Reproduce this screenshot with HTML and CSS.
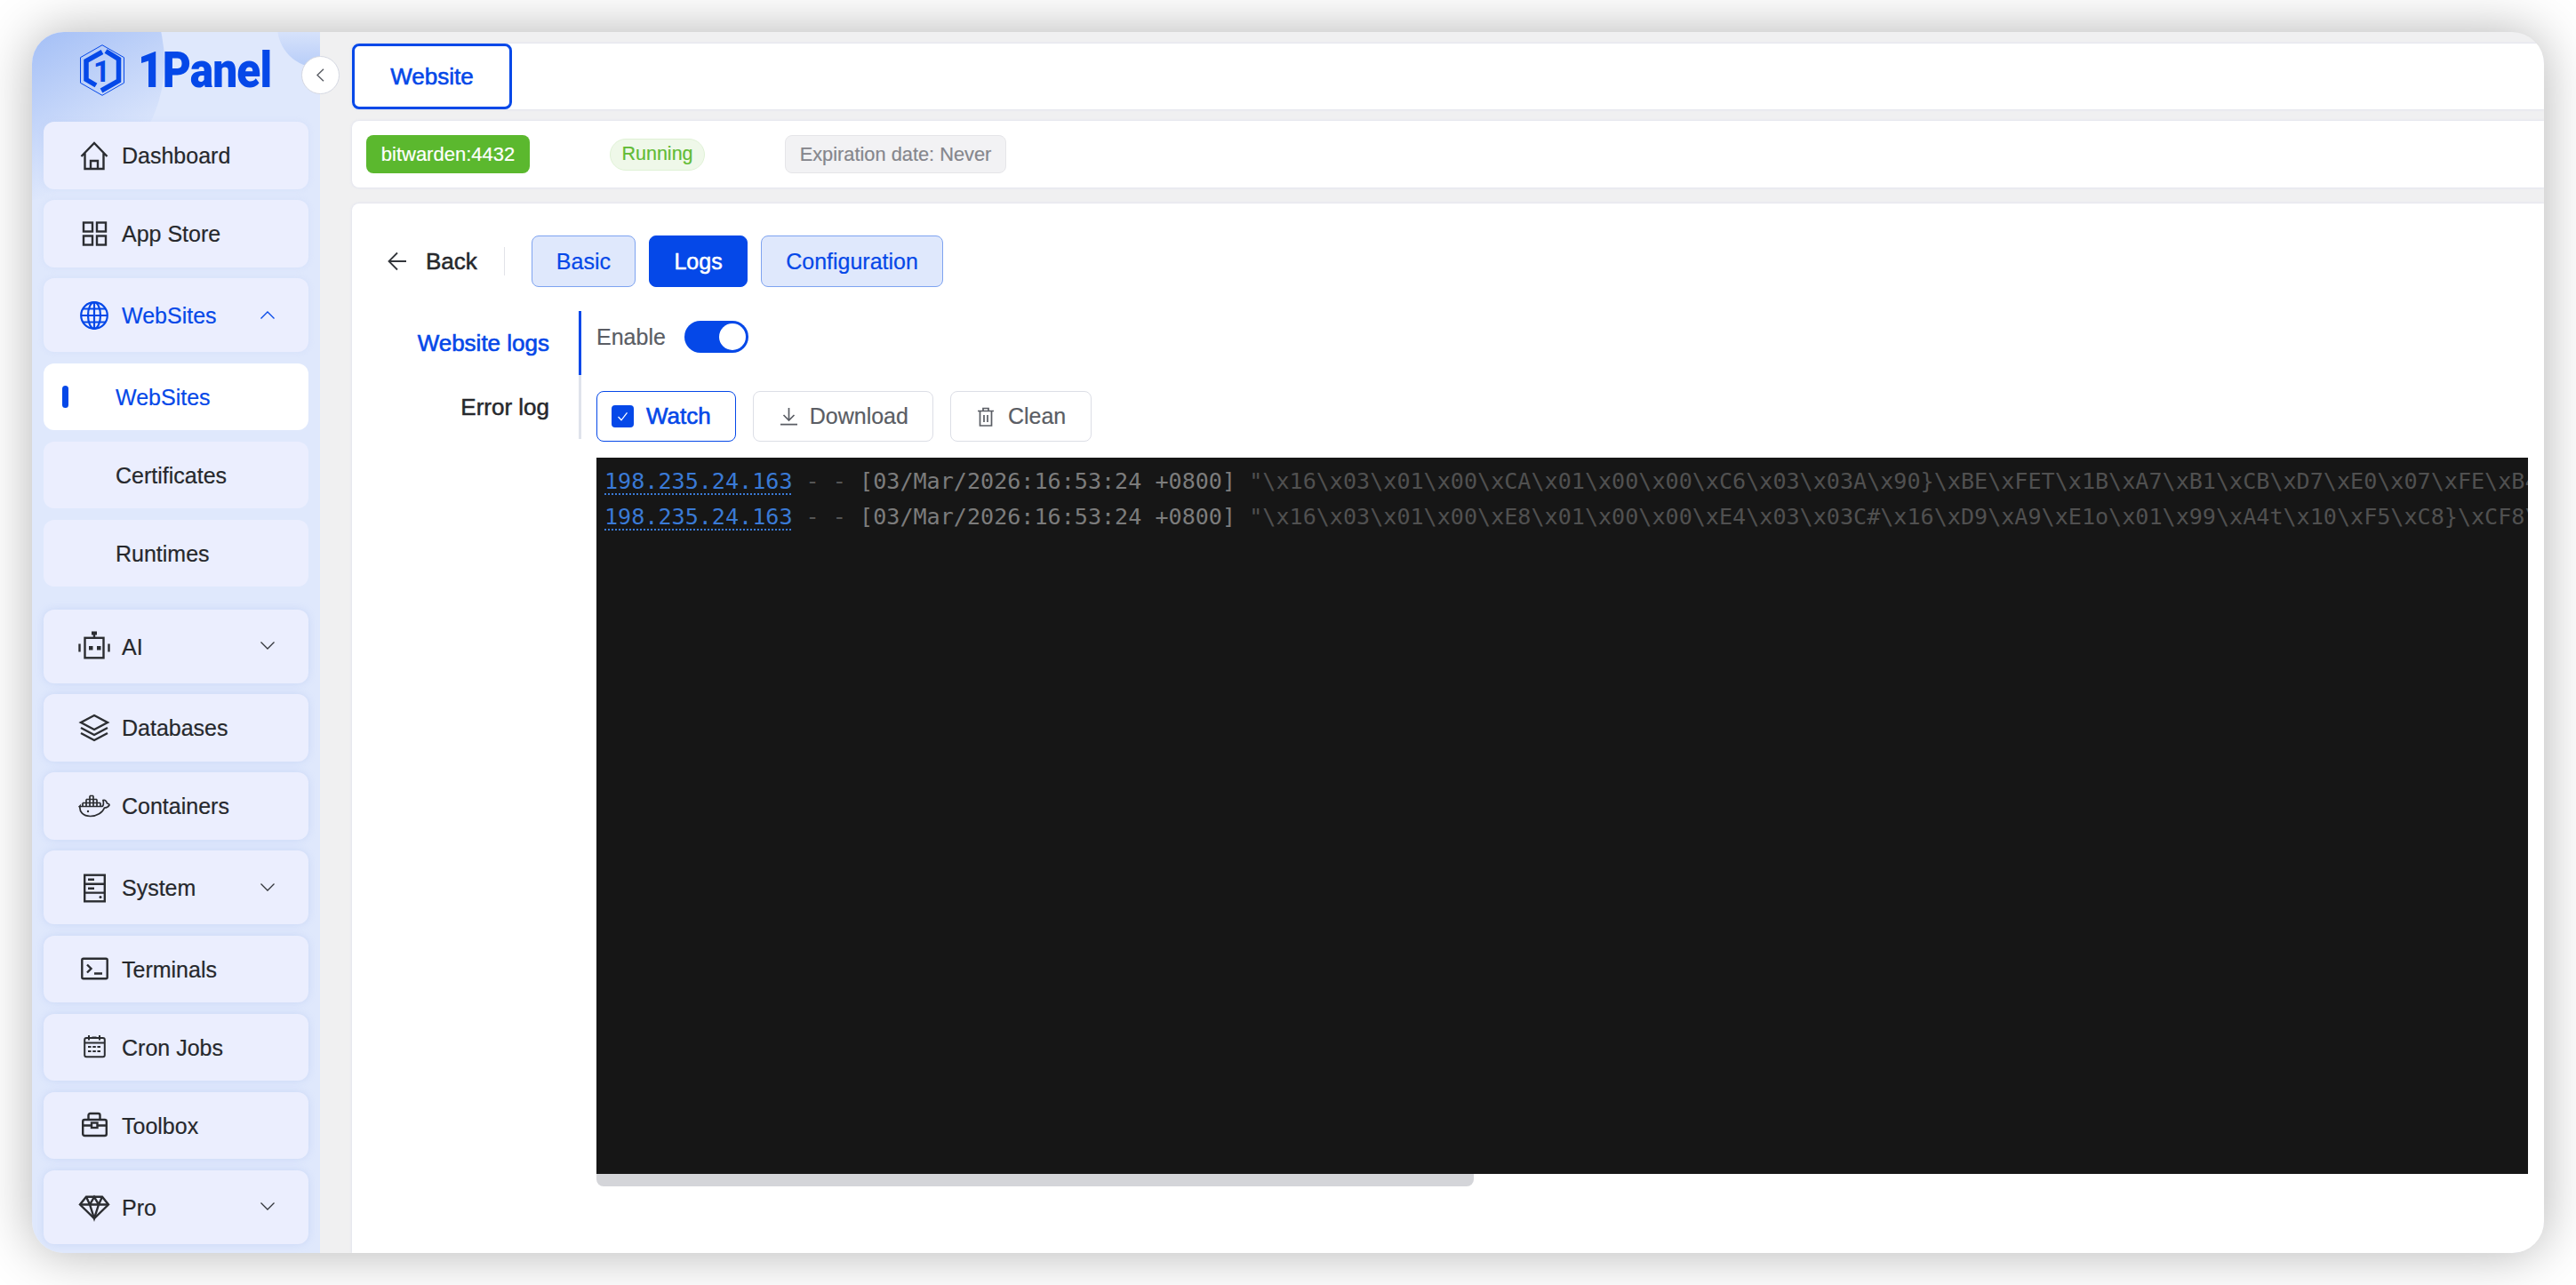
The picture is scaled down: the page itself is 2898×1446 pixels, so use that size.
FILE: index.html
```html
<!DOCTYPE html>
<html lang="en">
<head>
<meta charset="utf-8">
<title>1Panel</title>
<link rel="stylesheet" href="styles.css">
</head>
<body>
<div class="window">
  <aside class="sidebar">
    <div class="deco"><span class="blob-a"></span><span class="blob-b"></span></div>
    <div class="brand">
      <svg class="brand-mark" viewBox="0 0 50 58" width="50" height="58">
        <polygon points="25,.7 49.5,14.7 49.5,43.3 25,57.3 .5,43.3 .5,14.7" fill="none" stroke="#0548e8" stroke-width="1"/>
        <path d="M25 8.5 L7 18.5 V39.5 L18 46" fill="none" stroke="#0548e8" stroke-width="5.5"/>
        <path d="M29 7.5 L43.5 16.5 V41 L24 52" fill="none" stroke="#0548e8" stroke-width="5.5"/>
        <text x="24.5" y="42" class="brand-one">1</text>
      </svg>
      <span class="brand-name">1Panel</span>
    </div>
    <nav class="menu">
      <a class="item"><svg class="ico" viewBox="0 0 36 36"><path d="M3.5 19 18 4l14.5 15M7.5 15.5V33h21V15.500M14 33v-9h8v9"/></svg><span>Dashboard</span></a>
      <a class="item"><svg class="ico" viewBox="0 0 36 36"><rect x="6" y="5.500" width="10" height="10"/><rect x="21" y="5.500" width="10" height="10"/><rect x="6" y="20.500" width="10" height="10"/><rect x="21" y="20.500" width="10" height="10"/></svg><span>App Store</span></a>
      <a class="item tall active"><svg class="ico" viewBox="0 0 36 36"><circle cx="18" cy="18" r="14.800"/><ellipse cx="18" cy="18" rx="7" ry="14.800"/><path d="M3.200 18h29.600M5.500 10.500h25M5.500 25.500h25M18 3.200v29.600"/></svg><span>WebSites</span><svg class="chev" viewBox="0 0 16 9"><path d="M.5 8.500 8 1l7.500 7.500"/></svg></a>
      <a class="item sub current"><span>WebSites</span></a>
      <a class="item sub"><span>Certificates</span></a>
      <a class="item sub"><span>Runtimes</span></a>
      <a class="item tall lifted section-start"><svg class="ico" viewBox="0 0 36 36"><rect x="7.500" y="8.800" width="21" height="22.500"/><path d="M18 4v5"/><rect class="solid" x="15" y="1.500" width="6" height="4"/><rect class="solid" x=".3" y="15.500" width="2.400" height="9"/><rect class="solid" x="33.300" y="15.500" width="2.400" height="9"/><rect class="solid" x="12" y="18" width="4.500" height="4.500"/><rect class="solid" x="21" y="18" width="4.500" height="4.500"/></svg><span>AI</span><svg class="chev" viewBox="0 0 16 9"><path d="M.5.5 8 8l7.500-7.500"/></svg></a>
      <a class="item lifted"><svg class="ico" viewBox="0 0 36 36"><path d="M18 4 33 12 18 20 3 12Z"/><path d="M3 18l15 8 15-8M3 24l15 8 15-8"/></svg><span>Databases</span></a>
      <a class="item lifted"><svg class="ico thin" viewBox="0 0 36 36"><path d="M1.500 18.500H26.500c2-.5 2-4.500 1.500-7 2-1 4 1.500 4.500 3.500 1 .2 2.500.8 2.500 2-1.500 2.500-3.500 3-5.500 3-2 5.500-8.500 9.500-16 9.500-8 0-12.500-5-11.500-11.500Z"/><path d="M5 14.500h20M5 18.500v-4M9 18.500V10.500M13 18.500V6.500M17 18.500V6.500M21 18.500V10.500M25 18.500v-4M9 10.500h12M13 6.500h4"/><circle class="solid" cx="11" cy="24" r="1.200"/></svg><span>Containers</span></a>
      <a class="item tall lifted"><svg class="ico" viewBox="0 0 36 36"><rect x="7.200" y="3.700" width="22.600" height="29.600"/><path d="M7.200 13.800h22.600M7.200 23.600h22.600M11 8.800h7M11 18.700h7"/><circle class="solid" cx="25" cy="28.500" r="1.500"/></svg><span>System</span><svg class="chev" viewBox="0 0 16 9"><path d="M.5.5 8 8l7.500-7.500"/></svg></a>
      <a class="item lifted"><svg class="ico" viewBox="0 0 36 36"><rect x="4.300" y="6.800" width="28.400" height="22.400" rx="1.500"/><path d="M10 13.500l4.500 4.500-4.500 4.500M18 23.500h9"/></svg><span>Terminals</span></a>
      <a class="item lifted"><svg class="ico thinner" viewBox="0 0 36 36"><rect x="7.200" y="8" width="22.600" height="21.200" rx="2"/><path d="M12 5v5.500M24 5v5.500M15.500 7.500h5M8 13.500h21M11 18h3.500M16.300 18h3.500M21.500 18h3.500M11 23h3.500M16.300 23h3.500M21.500 23h3.500"/></svg><span>Cron Jobs</span></a>
      <a class="item lifted"><svg class="ico" viewBox="0 0 36 36"><rect x="5.200" y="12" width="26.600" height="18" rx="2"/><path d="M11.500 12V7a2 2 0 0 1 2-2h9a2 2 0 0 1 2 2v5M5.200 18.500h10M21 18.500h10.800"/><rect x="15" y="15.500" width="6.500" height="5.500"/></svg><span>Toolbox</span></a>
      <a class="item tall lifted"><svg class="ico" viewBox="0 0 36 36"><path d="M9 6.800h18l7 8.700L18 31 2 15.500Z"/><path d="M2 15.500h32M9 6.800l4 8.700L18 31l5-15.500-5-8.700-5 8.700M23 15.500l4-8.700"/></svg><span>Pro</span><svg class="chev" viewBox="0 0 16 9"><path d="M.5.5 8 8l7.500-7.500"/></svg></a>
    </nav>
  </aside>
  <button class="collapse"><svg viewBox="0 0 9 15" width="9" height="15"><path d="M8 .7 1 7.500 8 14.300"/></svg></button>
  <main class="main">
    <section class="card tabs"><a class="tab">Website</a></section>
    <section class="card status">
      <span class="tag tag-app">bitwarden:4432</span>
      <span class="tag tag-run">Running</span>
      <span class="tag tag-exp">Expiration date: Never</span>
    </section>
    <section class="card detail">
      <div class="toolbar">
        <a class="back"><svg viewBox="0 0 22 22" width="22" height="22"><path d="M21 11H1.500M11 1.500 1.500 11l9.500 9.500"/></svg><span>Back</span></a>
        <i class="divider"></i>
        <a class="btn-tab">Basic</a>
        <a class="btn-tab on">Logs</a>
        <a class="btn-tab">Configuration</a>
      </div>
      <div class="split">
        <div class="side-tabs">
          <a class="side-tab on">Website logs</a>
          <a class="side-tab">Error log</a>
        </div>
        <div class="panel">
          <div class="enable"><span>Enable</span><i class="switch"><b></b></i></div>
          <div class="actions">
            <label class="btn watch"><i class="check"><svg viewBox="0 0 25 25" width="25" height="25"><path d="M7.500 13l3.500 3.800 6.500-8.500"/></svg></i><span>Watch</span></label>
            <a class="btn"><svg viewBox="0 0 21 21" width="21" height="21"><path d="M10.500 1v13.500M4.500 9l6 6 6-6M1 19.700h19"/></svg><span>Download</span></a>
            <a class="btn clean"><svg viewBox="0 0 20 22" width="20" height="22"><path d="M1 4.500h18M7 4.500V1.500h6v3M3.500 4.500V21h13V4.500M8 9v8M12 9v8"/></svg><span>Clean</span></a>
          </div>
          <div class="log">
            <p><span class="ip">198.235.24.163</span><span class="dash"> - - </span><span class="date">[03/Mar/2026:16:53:24 +0800]</span><span class="raw"> "\x16\x03\x01\x00\xCA\x01\x00\x00\xC6\x03\x03A\x90}\xBE\xFET\x1B\xA7\xB1\xCB\xD7\xE0\x07\xFE\xB4</span></p>
            <p><span class="ip">198.235.24.163</span><span class="dash"> - - </span><span class="date">[03/Mar/2026:16:53:24 +0800]</span><span class="raw"> "\x16\x03\x01\x00\xE8\x01\x00\x00\xE4\x03\x03C#\x16\xD9\xA9\xE1o\x01\x99\xA4t\x10\xF5\xC8}\xCF8\x</span></p>
          </div>
          <div class="scroll"><i></i></div>
        </div>
      </div>
    </section>
  </main>
</div>
</body>
</html>
```
FILE: styles.css
```css
* { box-sizing: border-box; }
html, body { margin: 0; height: 100%; background: #fff; }
body { padding: 36px; font-family: "Liberation Sans", Arial, sans-serif; color: #26282c; overflow: hidden; -webkit-text-stroke: .2px; }
a { text-decoration: none; color: inherit; }
p { margin: 0; white-space: pre; }

.window { position: relative; display: flex; width: 2826px; height: 1374px; border-radius: 36px; overflow: hidden; box-shadow: 0 0 60px rgba(0,0,0,.3); background: #f0f0f1; }

.sidebar { position: relative; flex: 0 0 324px; background: #dfe8fc; }
.deco { position: absolute; inset: 0; overflow: hidden; }
.blob-a { position: absolute; left: -161px; top: -121px; width: 310px; height: 310px; border-radius: 50%; background: linear-gradient(150deg, #9bb9f5 38%, #dfe8fc 84%); }
.blob-b { position: absolute; left: 276px; top: -52px; width: 92px; height: 92px; border-radius: 50%; background: linear-gradient(180deg, #dfe8fc 45%, #b6ccf8 100%); }

.brand { position: relative; display: flex; align-items: center; gap: 15px; height: 101px; padding: 0 0 15px 54px; }
.brand-mark { flex: none; }
.brand-one { font: 700 33px Roboto, sans-serif; fill: #0548e8; text-anchor: middle; -webkit-text-stroke: 0; }
.brand-name { font: 900 55px/1 Roboto, sans-serif; color: #0548e8; letter-spacing: -1px; transform: scaleX(.9); transform-origin: left center; -webkit-text-stroke: 0; }

.menu { position: relative; display: flex; flex-direction: column; gap: 12.500px; padding: 0 13px; }
.item { position: relative; display: flex; align-items: center; gap: 13px; height: 75.500px; padding-left: 39px; border-radius: 12px; background: #ebeefe; font-size: 25px; box-shadow: 0 0 6px rgba(190,205,245,.3); }
.item span { padding-top: 2px; }
.item.tall { height: 83px; }
.item.lifted { box-shadow: 0 0 8px rgba(170,190,240,.4); }
.section-start { margin-top: 13px; }
.item.sub { padding-left: 81px; box-shadow: none; }
.item.current { background: #fff; color: #0548e8; }
.item.current::before { content: ""; position: absolute; left: 21px; top: 25px; width: 7px; height: 25px; border-radius: 4px; background: #0548e8; }
.item.active { color: #0548e8; }

.ico { flex: none; width: 36px; height: 36px; fill: none; stroke: #2b2d31; stroke-width: 2.400; }
.ico.thin { stroke-width: 1.700; }
.ico.thinner { stroke-width: 2; }
.ico .solid { fill: #2b2d31; stroke: none; }
.active .ico { stroke: #0548e8; stroke-width: 2.200; }
.chev { position: absolute; right: 38px; top: 50%; width: 16px; height: 9px; margin-top: -5px; fill: none; stroke: #33363b; stroke-width: 1.300; }
.active .chev { stroke: #0548e8; }

.collapse { position: absolute; left: 303px; top: 27px; width: 43px; height: 43px; padding: 0; display: flex; align-items: center; justify-content: center; border: 1px solid #d5d8e2; border-radius: 50%; background: #fff; }
.collapse svg { fill: none; stroke: #5c5f66; stroke-width: 1.500; }

.main { flex: 1; min-width: 0; display: flex; flex-direction: column; padding: 13px 0 0 36px; }
.card { background: #fff; box-shadow: 0 0 3px rgba(205,210,235,.7); border-radius: 8px 0 0 8px; }
.tabs { display: flex; height: 74px; }
.tab { display: flex; align-items: center; justify-content: center; width: 180px; border: 3px solid #0548e8; border-radius: 8px; color: #0548e8; font-size: 26px; -webkit-text-stroke: .6px; }
.status { display: flex; align-items: center; height: 75px; margin-top: 13px; padding-left: 16px; }
.tag { display: flex; align-items: center; justify-content: center; font-size: 22px; }
.tag-app { width: 184px; height: 43px; border-radius: 8px; background: #5bb82e; color: #fff; }
.tag-run { width: 107px; height: 36px; margin-left: 90px; border-radius: 18px; background: #eff8e9; border: 1px solid #dff1d5; color: #62bb35; font-size: 21.500px; }
.tag-exp { width: 249px; height: 43px; margin-left: 90px; border-radius: 8px; background: #f2f2f4; border: 1px solid #e5e5e8; color: #85868c; font-size: 21.800px; }

.detail { flex: 1; margin-top: 18px; padding-top: 36px; border-radius: 8px 0 0 0; }
.toolbar { display: flex; align-items: center; height: 58px; padding-left: 40px; font-size: 25px; }
.back { display: flex; align-items: center; gap: 21px; font-size: 26px; -webkit-text-stroke: .5px; }
.back svg { fill: none; stroke: #33363b; stroke-width: 1.800; }
.divider { width: 1px; height: 32px; margin: 0 30px; background: #e2e3e8; }
.btn-tab { display: flex; align-items: center; height: 58px; padding: 0 27px; margin-right: 15px; border: 1.500px solid #7ea3f0; border-radius: 8px; background: #dfe8fc; color: #0548e8; }
.btn-tab.on { padding: 0 27.500px; background: #0548e8; border-color: #0548e8; color: #fff; -webkit-text-stroke: .5px; }

.split { display: flex; margin-top: 27px; }
.side-tabs { flex: 0 0 258px; display: flex; flex-direction: column; align-self: flex-start; }
.side-tab { display: flex; align-items: center; justify-content: flex-end; height: 72px; padding-right: 33px; border-right: 3px solid #dfe3eb; font-size: 26px; -webkit-text-stroke: .5px; }
.side-tab.on { border-right-color: #0548e8; color: #0548e8; -webkit-text-stroke: .6px; }

.panel { flex: 1; min-width: 0; padding: 11px 18px 0 17px; }
.enable { display: flex; align-items: center; gap: 21px; height: 36px; font-size: 25px; color: #5a5d64; }
.switch { display: flex; justify-content: flex-end; align-items: center; width: 72px; height: 36px; padding: 0 3px; border-radius: 18px; background: #0548e8; }
.switch b { width: 30px; height: 30px; border-radius: 50%; background: #fff; }

.actions { display: flex; gap: 19px; margin-top: 43px; height: 57px; }
.btn { display: flex; align-items: center; gap: 13px; padding: 0 27px 0 29px; border: 1.500px solid #dcdee6; border-radius: 8px; font-size: 25px; color: #5a5d64; }
.btn svg { flex: none; fill: none; stroke: #5a5d64; stroke-width: 1.700; }
.btn.clean { gap: 15px; padding: 0 28px 0 29px; }
.watch { gap: 14px; padding: 0 27px 0 16px; border-color: #0548e8; color: #0548e8; font-size: 26px; -webkit-text-stroke: .6px; }
.check { display: block; width: 25px; height: 25px; border-radius: 4px; background: #0548e8; }
.check svg { display: block; stroke: #fff; stroke-width: 1.300; }

.log { height: 806px; margin-top: 18px; padding: 7px 0 0 9px; background: #161616; overflow: hidden; font: 25.100px/40px "DejaVu Sans Mono", monospace; -webkit-text-stroke: 0; }
.ip { color: #3a7ad6; text-decoration: underline dotted; text-underline-offset: 5px; text-decoration-thickness: 2px; }
.dash { color: #555; }
.date { color: #7c7c7c; }
.raw { color: #505050; }

.scroll { height: 14px; }
.scroll i { display: block; width: 987px; height: 14px; border-radius: 0 0 8px 8px; background: #d4d5d9; }
```
